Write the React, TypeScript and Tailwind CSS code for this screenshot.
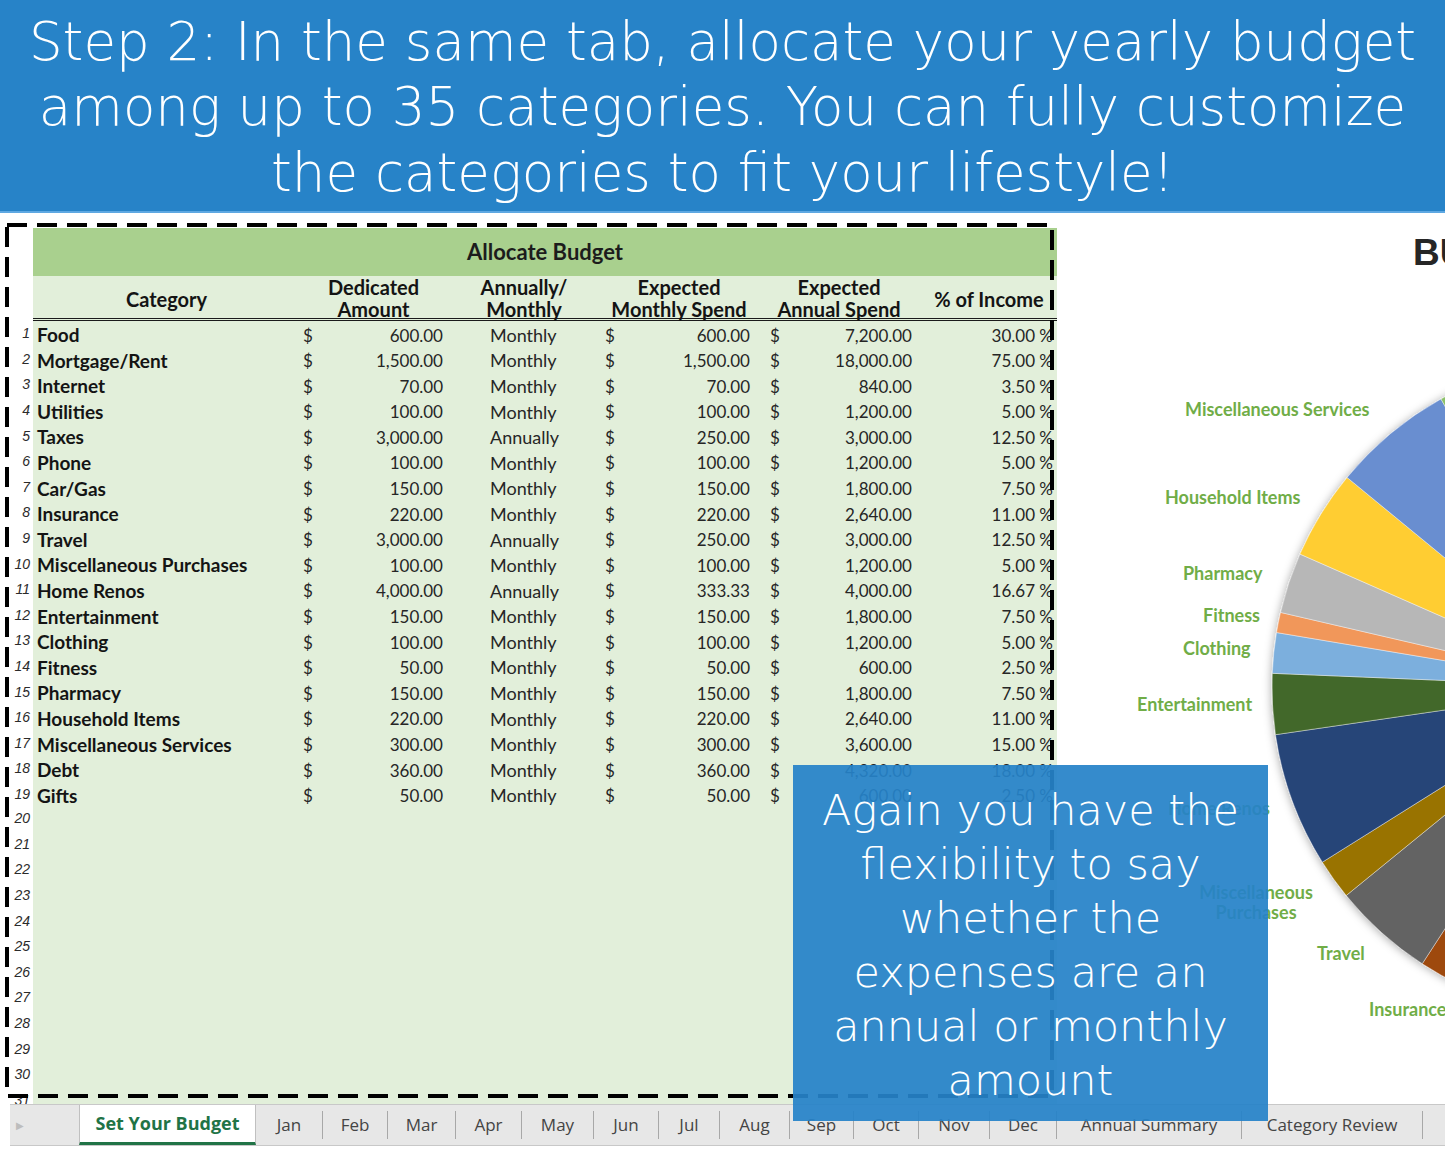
import React from 'react';

type Row = [string, string, string, string, string, string];

const rows: Row[] = [
  ['Food', '600.00', 'Monthly', '600.00', '7,200.00', '30.00'],
  ['Mortgage/Rent', '1,500.00', 'Monthly', '1,500.00', '18,000.00', '75.00'],
  ['Internet', '70.00', 'Monthly', '70.00', '840.00', '3.50'],
  ['Utilities', '100.00', 'Monthly', '100.00', '1,200.00', '5.00'],
  ['Taxes', '3,000.00', 'Annually', '250.00', '3,000.00', '12.50'],
  ['Phone', '100.00', 'Monthly', '100.00', '1,200.00', '5.00'],
  ['Car/Gas', '150.00', 'Monthly', '150.00', '1,800.00', '7.50'],
  ['Insurance', '220.00', 'Monthly', '220.00', '2,640.00', '11.00'],
  ['Travel', '3,000.00', 'Annually', '250.00', '3,000.00', '12.50'],
  ['Miscellaneous Purchases', '100.00', 'Monthly', '100.00', '1,200.00', '5.00'],
  ['Home Renos', '4,000.00', 'Annually', '333.33', '4,000.00', '16.67'],
  ['Entertainment', '150.00', 'Monthly', '150.00', '1,800.00', '7.50'],
  ['Clothing', '100.00', 'Monthly', '100.00', '1,200.00', '5.00'],
  ['Fitness', '50.00', 'Monthly', '50.00', '600.00', '2.50'],
  ['Pharmacy', '150.00', 'Monthly', '150.00', '1,800.00', '7.50'],
  ['Household Items', '220.00', 'Monthly', '220.00', '2,640.00', '11.00'],
  ['Miscellaneous Services', '300.00', 'Monthly', '300.00', '3,600.00', '15.00'],
  ['Debt', '360.00', 'Monthly', '360.00', '4,320.00', '18.00'],
  ['Gifts', '50.00', 'Monthly', '50.00', '600.00', '2.50'],
];

const pieColors = [
  '#5B9BD5', '#ED7D31', '#A5A5A5', '#FFC000', '#4472C4', '#70AD47', '#255E91', '#9E480E', '#636363',
  '#997300', '#264478', '#43682B', '#7CAFDD', '#F1975A', '#B7B7B7', '#FFCD33', '#698ED0', '#8CC168', '#C9C9C9',
];

const tabs: { name: string; w: string }[] = [
  { name: 'Jan', w: 'w-[66px]' },
  { name: 'Feb', w: 'w-[64px]' },
  { name: 'Mar', w: 'w-[67px]' },
  { name: 'Apr', w: 'w-[65px]' },
  { name: 'May', w: 'w-[71px]' },
  { name: 'Jun', w: 'w-[64px]' },
  { name: 'Jul', w: 'w-[60px]' },
  { name: 'Aug', w: 'w-[69px]' },
  { name: 'Sep', w: 'w-[63px]' },
  { name: 'Oct', w: 'w-[64px]' },
  { name: 'Nov', w: 'w-[70px]' },
  { name: 'Dec', w: 'w-[66px]' },
  { name: 'Annual Summary', w: 'w-[184px]' },
  { name: 'Category Review', w: 'w-[180px]' },
];

const gridCols = 'grid grid-cols-[267px_147px_154px_156px_164px_136px]';

function PieSlices() {
  const vals = rows.map((r) => parseFloat(r[5]));
  const total = vals.reduce((a, b) => a + b, 0);
  const cx = 1602;
  const cy = 687;
  const r = 330;
  const rad = Math.PI / 180;
  let acc = 0;
  return (
    <>
      {vals.map((v, i) => {
        const a0 = -90 + (acc / total) * 360;
        acc += v;
        const a1 = -90 + (acc / total) * 360;
        const x0 = cx + r * Math.cos(a0 * rad);
        const y0 = cy + r * Math.sin(a0 * rad);
        const x1 = cx + r * Math.cos(a1 * rad);
        const y1 = cy + r * Math.sin(a1 * rad);
        const large = a1 - a0 > 180 ? 1 : 0;
        return (
          <path
            key={i}
            d={`M${cx} ${cy} L${x0.toFixed(2)} ${y0.toFixed(2)} A${r} ${r} 0 ${large} 1 ${x1.toFixed(2)} ${y1.toFixed(2)} Z`}
            fill={pieColors[i]}
            stroke="#ffffff"
            strokeOpacity={0.5}
            strokeWidth={0.8}
          />
        );
      })}
    </>
  );
}

function Chart() {
  const label = { fontFamily: 'Lato, sans-serif', fontWeight: 700, fontSize: 18, fill: '#70AD47' } as const;
  return (
    <svg className="absolute inset-0" width={388} height={891} viewBox="1057 213 388 891">
      <defs>
        <filter id="pieShadow" x="-20%" y="-20%" width="140%" height="140%">
          <feDropShadow dx="-1" dy="1" stdDeviation="4" floodColor="#000000" floodOpacity="0.3" />
        </filter>
      </defs>
      <text x={1413} y={265} fontFamily="'Liberation Sans', Arial, sans-serif" fontWeight={700} fontSize={37} fill="#262626">
        BUDGET
      </text>
      <g filter="url(#pieShadow)">
        <PieSlices />
      </g>
      <text x={1185} y={416} {...label}>Miscellaneous Services</text>
      <text x={1165} y={504} {...label}>Household Items</text>
      <text x={1183} y={580} {...label}>Pharmacy</text>
      <text x={1203} y={622} {...label}>Fitness</text>
      <text x={1183} y={655} {...label}>Clothing</text>
      <text x={1137} y={711} {...label}>Entertainment</text>
      <text x={1168} y={815} {...label}>Home Renos</text>
      <text x={1256} y={899} textAnchor="middle" {...label}>Miscellaneous</text>
      <text x={1256} y={919} textAnchor="middle" {...label}>Purchases</text>
      <text x={1317} y={960} {...label}>Travel</text>
      <text x={1369} y={1016} {...label}>Insurance</text>
    </svg>
  );
}

function Sheet() {
  const rowNums = Array.from({ length: 31 }, (_, i) => i + 1);
  return (
    <div className="w-[1057px] flex pt-[15px] overflow-hidden">
      <div className="w-[33px] shrink-0 bg-white">
        <div className="h-[93px]" />
        {rowNums.map((n) => (
          <div
            key={n}
            className={`h-[25.6px] flex justify-end pr-[3px] text-[14px] italic text-[#2b2b2b] font-['Liberation_Sans',Arial,sans-serif] ${n >= 20 ? 'items-start pt-[1px]' : 'items-center'}`}
          >
            {n}
          </div>
        ))}
      </div>
      <div className="w-[1024px] shrink-0 bg-[#e2efda] font-['Lato',sans-serif] text-[#1c1c1c]">
        <div className="h-[48px] bg-[#a9d08e] flex items-center justify-center text-[22px] font-bold pb-[2px]">Allocate Budget</div>
        <div className={`${gridCols} h-[45px] border-b-[3px] border-double border-[#1a1a1a] items-center text-center text-[20px] font-bold leading-[22px] text-[#141414]`}>
          <div>Category</div>
          <div className="pb-[2px]">Dedicated<br />Amount</div>
          <div className="pb-[2px]">Annually/<br />Monthly</div>
          <div className="pb-[2px]">Expected<br />Monthly Spend</div>
          <div className="pb-[2px]">Expected<br />Annual Spend</div>
          <div>% of Income</div>
        </div>
        {rowNums.map((n) => {
          const r = rows[n - 1];
          if (!r) return <div key={n} className="h-[25.6px]" />;
          return (
            <div key={n} className={`${gridCols} h-[25.6px] items-center text-[17px] text-[#262626]`}>
              <div className="pl-[4px] text-[19px] font-bold text-[#141414] whitespace-nowrap">{r[0]}</div>
              <div className="flex justify-between pl-[3px] pr-[4px]"><span>$</span><span>{r[1]}</span></div>
              <div className="pl-[43px] text-[18px]">{r[2]}</div>
              <div className="flex justify-between pl-[4px] pr-[7px]"><span>$</span><span>{r[3]}</span></div>
              <div className="flex justify-between pl-[13px] pr-[9px]"><span>$</span><span>{r[4]}</span></div>
              <div className="text-right pr-[4px]">{r[5]} %</div>
            </div>
          );
        })}
      </div>
    </div>
  );
}

function Tabs() {
  return (
    <div className="h-[52px] pl-[10px] bg-white">
      <div className="h-[42px] bg-[#e7e7e7] border-t border-b border-[#c8c8c8] flex items-center font-['Open_Sans',sans-serif] text-[17px] text-[#444444]">
        <div className="w-[69px] h-full flex items-center pl-[6px] text-[10px] text-[#bdbdbd]">▶</div>
        <div className="w-[177px] h-full bg-white border-x border-[#c0c0c0] border-b-[3px] border-b-[#217346] flex items-center justify-center text-[18px] font-bold text-[#217346]">
          Set Your Budget
        </div>
        {tabs.map((t) => (
          <React.Fragment key={t.name}>
            <div className={`${t.w} h-full flex items-center justify-center whitespace-nowrap`}>{t.name}</div>
            <div className="w-px h-[28px] bg-[#a8a8a8]" />
          </React.Fragment>
        ))}
        <div className="flex-1 h-full" />
      </div>
    </div>
  );
}

export default function App() {
  return (
    <div className="relative w-[1445px] h-[1156px] overflow-hidden bg-white flex flex-col">
      <header className="h-[213px] shrink-0 bg-[#2783c8] border-b-2 border-[#5ea8e2] flex items-center justify-center text-center text-white font-['DejaVu_Sans',sans-serif] font-extralight text-[53px] leading-[65.5px] pt-[3px]">
        <div>
          Step 2: In the same tab, allocate your yearly budget<br />
          among up to 35 categories. You can fully customize<br />
          the categories to fit your lifestyle!
        </div>
      </header>
      <main className="relative flex h-[891px] shrink-0">
        <Sheet />
        <div className="relative flex-1 bg-white overflow-hidden">
          <Chart />
        </div>
      </main>
      <Tabs />

      <svg className="absolute left-0 top-0 pointer-events-none z-10" width={1445} height={1156}>
        <rect x={7} y={225} width={1045} height={871} fill="none" stroke="#000000" strokeWidth={4} strokeDasharray="20 10" />
      </svg>

      <div className="absolute left-[793px] top-[765px] w-[475px] h-[356px] z-20 bg-[#2682c8]/[0.93] text-white text-center font-['DejaVu_Sans',sans-serif] font-extralight text-[43px] leading-[54px] pt-[18px]">
        Again you have the<br />
        flexibility to say<br />
        whether the<br />
        expenses are an<br />
        annual or monthly<br />
        amount
      </div>
    </div>
  );
}
